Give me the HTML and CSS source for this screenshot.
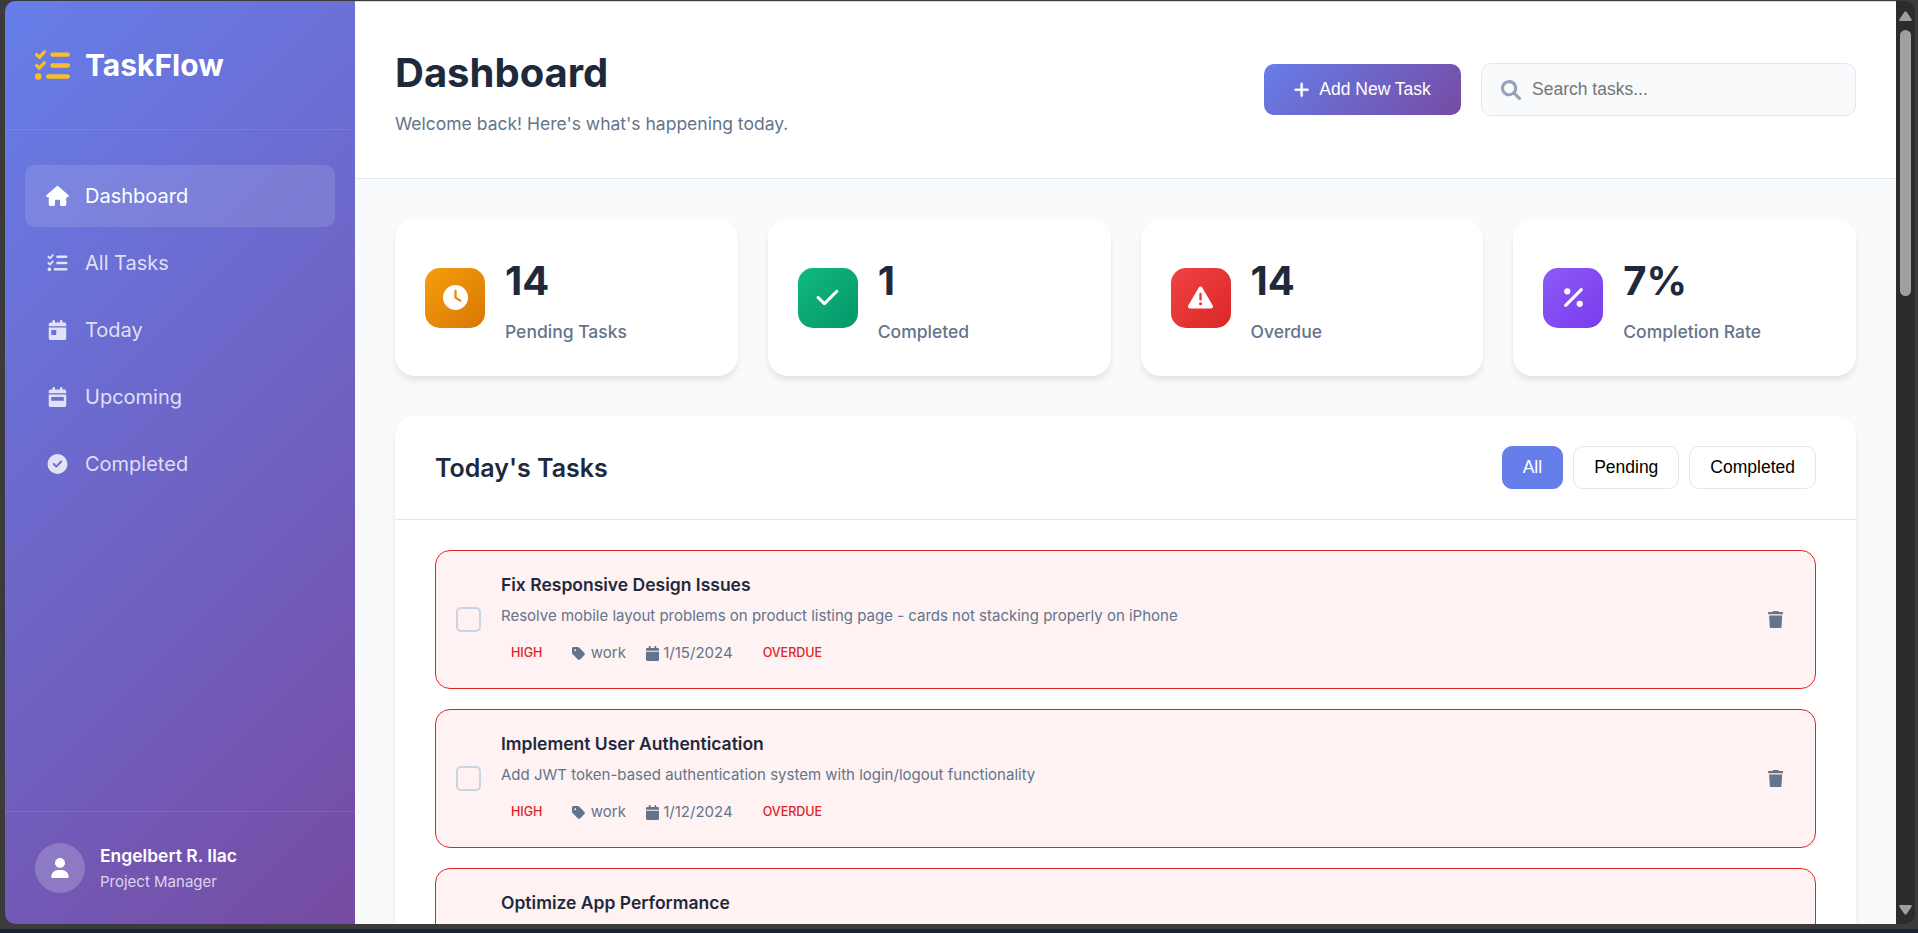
FILE: index.html
```html
<!DOCTYPE html>
<html lang="en">
<head>
<meta charset="utf-8">
<title>TaskFlow</title>
<link rel="stylesheet" href="styles.css">
</head>
<body>
<svg class="sprite" aria-hidden="true">
  <symbol id="list-check" viewBox="0 0 512 512"><path d="M152.1 38.2c9.9 8.9 10.7 24 1.8 33.9l-72 80c-4.4 4.9-10.6 7.8-17.2 7.9s-12.9-2.4-17.6-7L7 113C-2.3 103.6-2.3 88.4 7 79s24.6-9.4 33.9 0l22.1 22.1 55.1-61.2c8.9-9.9 24-10.7 33.9-1.8zm0 160c9.9 8.9 10.7 24 1.8 33.9l-72 80c-4.4 4.9-10.6 7.8-17.2 7.9s-12.9-2.4-17.6-7L7 273c-9.4-9.4-9.4-24.6 0-33.9s24.6-9.4 33.9 0l22.1 22.1 55.1-61.2c8.9-9.9 24-10.7 33.9-1.8zM224 96c0-17.7 14.3-32 32-32H480c17.7 0 32 14.3 32 32s-14.3 32-32 32H256c-17.7 0-32-14.3-32-32zm0 160c0-17.7 14.3-32 32-32H480c17.7 0 32 14.3 32 32s-14.3 32-32 32H256c-17.7 0-32-14.3-32-32zM160 416c0-17.7 14.3-32 32-32H480c17.7 0 32 14.3 32 32s-14.3 32-32 32H192c-17.7 0-32-14.3-32-32zM48 368a48 48 0 1 1 0 96 48 48 0 1 1 0-96z"/></symbol>
  <symbol id="house" viewBox="0 0 576 512"><path d="M575.8 255.5c0 18-15 32.1-32 32.1h-32l.7 160.2c0 2.7-.2 5.4-.5 8.1V472c0 22.1-17.9 40-40 40H456c-1.1 0-2.2 0-3.3-.1c-1.4 .1-2.8 .1-4.2 .1H416 392c-22.1 0-40-17.9-40-40V448 384c0-17.7-14.3-32-32-32H256c-17.7 0-32 14.3-32 32v64 24c0 22.1-17.9 40-40 40H160 128.1c-1.5 0-3-.1-4.5-.2c-1.2 .1-2.4 .2-3.6 .2H104c-22.1 0-40-17.9-40-40V360c0-.9 0-1.9 .1-2.8V287.6H32c-18 0-32-14-32-32.1c0-9 3-17 10-24L266.4 8c7-7 15-8 22-8s15 2 21 7L564.8 231.5c8 7 12 15 11 24z"/></symbol>
  <symbol id="calendar-day" viewBox="0 0 448 512"><path d="M128 0c17.7 0 32 14.3 32 32V64H288V32c0-17.7 14.3-32 32-32s32 14.3 32 32V64h48c26.5 0 48 21.5 48 48v48H0V112C0 85.5 21.5 64 48 64H96V32c0-17.7 14.3-32 32-32zM0 192H448V464c0 26.5-21.5 48-48 48H48c-26.5 0-48-21.5-48-48V192zm80 64c-8.8 0-16 7.2-16 16v96c0 8.8 7.2 16 16 16h96c8.8 0 16-7.2 16-16V272c0-8.8-7.2-16-16-16H80z"/></symbol>
  <symbol id="calendar-week" viewBox="0 0 448 512"><path d="M128 0c17.7 0 32 14.3 32 32V64H288V32c0-17.7 14.3-32 32-32s32 14.3 32 32V64h48c26.5 0 48 21.5 48 48v48H0V112C0 85.5 21.5 64 48 64H96V32c0-17.7 14.3-32 32-32zM0 192H448V464c0 26.5-21.5 48-48 48H48c-26.5 0-48-21.5-48-48V192zm80 64c-8.8 0-16 7.2-16 16v64c0 8.8 7.2 16 16 16H368c8.8 0 16-7.2 16-16V272c0-8.8-7.2-16-16-16H80z"/></symbol>
  <symbol id="circle-check" viewBox="0 0 512 512"><path d="M256 512A256 256 0 1 0 256 0a256 256 0 1 0 0 512zM369 209L241 337c-9.4 9.4-24.6 9.4-33.9 0l-64-64c-9.4-9.4-9.4-24.6 0-33.9s24.6-9.4 33.9 0l47 47L335 175c9.4-9.4 24.6-9.4 33.9 0s9.4 24.6 0 33.9z"/></symbol>
  <symbol id="user" viewBox="0 0 448 512"><path d="M224 256A128 128 0 1 0 224 0a128 128 0 1 0 0 256zm-45.7 48C79.8 304 0 383.8 0 482.3C0 498.7 13.3 512 29.7 512H418.3c16.4 0 29.7-13.3 29.7-29.7C448 383.8 368.2 304 269.7 304H178.3z"/></symbol>
  <symbol id="plus" viewBox="0 0 448 512"><path d="M256 80c0-17.7-14.3-32-32-32s-32 14.3-32 32V224H48c-17.7 0-32 14.3-32 32s14.3 32 32 32H192V432c0 17.7 14.3 32 32 32s32-14.3 32-32V288H400c17.7 0 32-14.3 32-32s-14.3-32-32-32H256V80z"/></symbol>
  <symbol id="search" viewBox="0 0 512 512"><path d="M500.3 443.7l-119.7-119.7c27.22-40.41 40.65-90.9 33.46-144.7C401.8 87.79 326.8 13.32 235.2 1.723C99.01-15.51-15.51 99.01 1.724 235.2c11.6 91.64 86.08 166.7 177.6 178.9c53.8 7.189 104.3-6.236 144.7-33.46l119.7 119.7c15.62 15.62 40.95 15.62 56.57 0C515.9 484.7 515.9 459.3 500.3 443.7zM79.1 208c0-70.58 57.42-128 128-128s128 57.42 128 128c0 70.58-57.42 128-128 128S79.1 278.6 79.1 208z"/></symbol>
  <symbol id="clock" viewBox="0 0 512 512"><path d="M256 0a256 256 0 1 1 0 512A256 256 0 1 1 256 0zM232 120V256c0 8 4 15.5 10.7 20l96 64c11 7.4 25.9 4.4 33.3-6.7s4.4-25.9-6.7-33.3L280 243.2V120c0-13.3-10.7-24-24-24s-24 10.7-24 24z"/></symbol>
  <symbol id="check" viewBox="0 0 448 512"><path d="M438.6 105.4c12.5 12.5 12.5 32.8 0 45.3l-256 256c-12.5 12.5-32.8 12.5-45.3 0l-128-128c-12.5-12.5-12.5-32.8 0-45.3s32.8-12.5 45.3 0L160 338.7 393.4 105.4c12.5-12.5 32.8-12.5 45.3 0z"/></symbol>
  <symbol id="warning" viewBox="0 0 512 512"><path d="M256 32c14.2 0 27.3 7.5 34.5 19.8l216 368c7.3 12.4 7.3 27.7 .2 40.1S486.3 480 472 480H40c-14.3 0-27.6-7.7-34.7-20.1s-7-27.8 .2-40.1l216-368C228.7 39.5 241.8 32 256 32zm0 128c-13.3 0-24 10.7-24 24V296c0 13.3 10.7 24 24 24s24-10.7 24-24V184c0-13.3-10.7-24-24-24zm32 224a32 32 0 1 0-64 0 32 32 0 1 0 64 0z"/></symbol>
  <symbol id="percent" viewBox="0 0 384 512"><path d="M374.6 118.6c12.5-12.5 12.5-32.8 0-45.3s-32.8-12.5-45.3 0l-320 320c-12.5 12.5-12.5 32.8 0 45.3s32.8 12.5 45.3 0l320-320zM128 128A64 64 0 1 0 0 128a64 64 0 1 0 128 0zM384 384a64 64 0 1 0-128 0 64 64 0 1 0 128 0z"/></symbol>
  <symbol id="tag" viewBox="0 0 448 512"><path d="M0 80V229.5c0 17 6.7 33.3 18.7 45.3l176 176c25 25 65.5 25 90.5 0L418.7 317.3c25-25 25-65.5 0-90.5l-176-176c-12-12-28.3-18.7-45.3-18.7H48C21.5 32 0 53.5 0 80zm112 32a32 32 0 1 1 0 64 32 32 0 1 1 0-64z"/></symbol>
  <symbol id="calendar" viewBox="0 0 448 512"><path d="M96 32V64H48C21.5 64 0 85.5 0 112v48H448V112c0-26.5-21.5-48-48-48H352V32c0-17.7-14.3-32-32-32s-32 14.3-32 32V64H160V32c0-17.7-14.3-32-32-32S96 14.3 96 32zM448 192H0V464c0 26.5 21.5 48 48 48H400c26.5 0 48-21.5 48-48V192z"/></symbol>
  <symbol id="trash" viewBox="0 0 448 512"><path d="M135.2 17.7L128 32H32C14.3 32 0 46.3 0 64S14.3 96 32 96H416c17.7 0 32-14.3 32-32s-14.3-32-32-32H320l-7.2-14.3C307.4 6.8 296.3 0 284.2 0H163.8c-12.1 0-23.2 6.8-28.6 17.7zM416 128H32L53.2 467c1.6 25.3 22.6 45 47.9 45H346.9c25.3 0 46.3-19.7 47.9-45L416 128z"/></symbol>
</svg>

<div class="window">
  <aside class="sidebar">
    <div class="logo">
      <svg class="logo-icon"><use href="#list-check"/></svg>
      <span>TaskFlow</span>
    </div>
    <nav class="nav">
      <a class="nav-item active"><svg class="nav-icon"><use href="#house"/></svg><span>Dashboard</span></a>
      <a class="nav-item"><svg class="nav-icon"><use href="#list-check"/></svg><span>All Tasks</span></a>
      <a class="nav-item"><svg class="nav-icon"><use href="#calendar-day"/></svg><span>Today</span></a>
      <a class="nav-item"><svg class="nav-icon"><use href="#calendar-week"/></svg><span>Upcoming</span></a>
      <a class="nav-item"><svg class="nav-icon"><use href="#circle-check"/></svg><span>Completed</span></a>
    </nav>
    <div class="profile">
      <div class="avatar"><svg class="avatar-icon"><use href="#user"/></svg></div>
      <div>
        <div class="profile-name">Engelbert R. Ilac</div>
        <div class="profile-role">Project Manager</div>
      </div>
    </div>
  </aside>

  <main class="main">
    <header class="header">
      <div>
        <h1 class="title">Dashboard</h1>
        <p class="subtitle">Welcome back! Here's what's happening today.</p>
      </div>
      <div class="actions">
        <button class="add-btn"><svg class="add-icon"><use href="#plus"/></svg>Add New Task</button>
        <div class="search">
          <svg class="search-icon"><use href="#search"/></svg>
          <span class="search-text">Search tasks...</span>
        </div>
      </div>
    </header>

    <div class="content">
      <section class="stats">
        <div class="stat">
          <div class="stat-icon pending"><svg><use href="#clock"/></svg></div>
          <div><div class="stat-value">14</div><div class="stat-label">Pending Tasks</div></div>
        </div>
        <div class="stat">
          <div class="stat-icon done"><svg><use href="#check"/></svg></div>
          <div><div class="stat-value">1</div><div class="stat-label">Completed</div></div>
        </div>
        <div class="stat">
          <div class="stat-icon overdue"><svg><use href="#warning"/></svg></div>
          <div><div class="stat-value">14</div><div class="stat-label">Overdue</div></div>
        </div>
        <div class="stat">
          <div class="stat-icon rate"><svg><use href="#percent"/></svg></div>
          <div><div class="stat-value">7%</div><div class="stat-label">Completion Rate</div></div>
        </div>
      </section>

      <section class="tasks">
        <div class="tasks-header">
          <h2 class="tasks-title">Today's Tasks</h2>
          <div class="filters">
            <button class="filter selected">All</button>
            <button class="filter">Pending</button>
            <button class="filter">Completed</button>
          </div>
        </div>
        <div class="task-list">
          <article class="task">
            <div class="checkbox"></div>
            <div class="task-body">
              <div class="task-title">Fix Responsive Design Issues</div>
              <div class="task-desc">Resolve mobile layout problems on product listing page - cards not stacking properly on iPhone</div>
              <div class="task-meta">
                <span class="badge">HIGH</span>
                <span class="meta category"><svg class="meta-icon"><use href="#tag"/></svg>work</span>
                <span class="meta"><svg class="meta-icon"><use href="#calendar"/></svg>1/15/2024</span>
                <span class="badge">OVERDUE</span>
              </div>
            </div>
            <svg class="trash"><use href="#trash"/></svg>
          </article>
          <article class="task">
            <div class="checkbox"></div>
            <div class="task-body">
              <div class="task-title">Implement User Authentication</div>
              <div class="task-desc">Add JWT token-based authentication system with login/logout functionality</div>
              <div class="task-meta">
                <span class="badge">HIGH</span>
                <span class="meta category"><svg class="meta-icon"><use href="#tag"/></svg>work</span>
                <span class="meta"><svg class="meta-icon"><use href="#calendar"/></svg>1/12/2024</span>
                <span class="badge">OVERDUE</span>
              </div>
            </div>
            <svg class="trash"><use href="#trash"/></svg>
          </article>
          <article class="task">
            <div class="checkbox"></div>
            <div class="task-body">
              <div class="task-title">Optimize App Performance</div>
            </div>
          </article>
        </div>
      </section>
    </div>
  </main>

  <div class="scrollbar">
    <svg class="arrow" viewBox="0 0 13 10"><path d="M5.2 1.2Q6.5-.6 7.8 1.2L12.6 8.2Q13.200 10 11.500 10H1.500Q-.2 10 .4 8.200Z"/></svg>
    <div class="thumb"></div>
    <svg class="arrow arrow-down" viewBox="0 0 13 10"><path d="M5.2 8.8Q6.5 10.600 7.800 8.800L12.600 1.800Q13.200 0 11.500 0H1.500Q-.2 0 .4 1.800Z"/></svg>
  </div>
</div>
<div class="desktop-edge"></div>
</body>
</html>
```

FILE: styles.css
```css
* { box-sizing: border-box; margin: 0; padding: 0; }

body {
  width: 1918px;
  height: 933px;
  padding: 1px 3px 0 5px;
  overflow: hidden;
  background: #3b3b3b;
  font-family: Inter, "Open Sans", sans-serif;
  line-height: 1.6;
  color: #1e293b;
}

svg { display: block; fill: currentColor; }
.sprite { display: none; }

.window {
  display: flex;
  height: 923px;
  border-radius: 10px;
  overflow: hidden;
  background: #2c2c2c;
}
.desktop-edge { height: 4px; margin: 5px -3px 0 -5px; background: #1a2237; }

/* Sidebar */
.sidebar {
  display: flex;
  flex-direction: column;
  flex: none;
  width: 350px;
  background: linear-gradient(135deg, #667eea 0%, #764ba2 100%);
  color: #fff;
}
.logo {
  display: flex;
  align-items: center;
  gap: 15px;
  height: 129px;
  padding: 0 30px;
  border-bottom: 1px solid rgba(255, 255, 255, .1);
  font-size: 30px;
  font-weight: 700;
}
.logo-icon { width: 35px; height: 35px; color: #fbbf24; }
.nav { display: flex; flex-direction: column; flex: 1; gap: 5px; padding: 35px 20px; }
.nav-item {
  display: flex;
  align-items: center;
  gap: 15px;
  height: 62px;
  padding: 0 20px;
  border-radius: 10px;
  font-size: 20px;
  color: rgba(255, 255, 255, .8);
}
.nav-item.active { background: rgba(255, 255, 255, .12); color: #fff; }
.nav-icon { width: 25px; height: 20px; }
.profile {
  display: flex;
  align-items: center;
  gap: 15px;
  padding: 30px;
  border-top: 1px solid rgba(255, 255, 255, .1);
}
.avatar {
  display: flex;
  align-items: center;
  justify-content: center;
  width: 50px;
  height: 50px;
  border-radius: 50%;
  background: rgba(255, 255, 255, .2);
}
.avatar-icon { width: 18px; height: 20px; }
.profile-name { font-size: 17.5px; font-weight: 600; }
.profile-role { font-size: 15px; color: rgba(255, 255, 255, .75); }

/* Main */
.main { width: 1541px; flex: none; background: #f8fafc; }
.header {
  display: flex;
  align-items: center;
  justify-content: space-between;
  padding: 40px;
  border-bottom: 1px solid #e2e8f0;
  background: #fff;
  box-shadow: inset 0 1px #dcdcdc;
}
.title { font-size: 40px; font-weight: 700; }
.subtitle { margin-top: 5px; font-size: 17.5px; color: #64748b; }
.actions { display: flex; align-items: center; gap: 20px; }
.add-btn {
  display: flex;
  align-items: center;
  gap: 10px;
  width: 197px;
  height: 51px;
  padding: 0 30px;
  border: 0;
  border-radius: 10px;
  background: linear-gradient(135deg, #667eea, #764ba2);
  color: #fff;
  font: 17.5px "Liberation Sans", Arial, sans-serif;
  white-space: nowrap;
}
.add-icon { flex: none; width: 15.3px; height: 17.5px; stroke: currentColor; stroke-width: 10; }
.search {
  display: flex;
  align-items: center;
  gap: 11px;
  width: 375px;
  height: 53px;
  padding: 0 19px;
  border: 1px solid #e2e8f0;
  border-radius: 10px;
  background: #f8fafc;
}
.search-icon { width: 20px; height: 20px; color: #94a3b8; }
.search-text { font: 17.5px "Liberation Sans", Arial, sans-serif; color: #757575; }

.content { padding: 40px; }

/* Statistics */
.stats { display: grid; grid-template-columns: repeat(4, 1fr); gap: 30px; margin-bottom: 40px; }
.stat {
  display: flex;
  align-items: center;
  gap: 20px;
  padding: 30px;
  border-radius: 20px;
  background: #fff;
  box-shadow: 0 5px 7.5px -1.25px rgba(0, 0, 0, .1);
}
.stat-icon {
  display: flex;
  align-items: center;
  justify-content: center;
  width: 60px;
  height: 60px;
  border-radius: 15px;
  color: #fff;
}
.stat-icon svg { width: 25px; height: 25px; }
.pending { background: linear-gradient(135deg, #f59e0b, #d97706); }
.done { background: linear-gradient(135deg, #10b981, #059669); }
.overdue { background: linear-gradient(135deg, #ef4444, #dc2626); }
.rate { background: linear-gradient(135deg, #8b5cf6, #7c3aed); }
.stat-value { margin-bottom: 5px; font-size: 40px; font-weight: 700; }
.stat-label { font-size: 17.5px; font-weight: 500; color: #64748b; }

/* Tasks */
.tasks { border-radius: 20px; background: #fff; box-shadow: 0 5px 7.5px -1.25px rgba(0, 0, 0, .1); }
.tasks-header {
  display: flex;
  align-items: center;
  justify-content: space-between;
  padding: 30px 40px;
  border-bottom: 1px solid #e2e8f0;
}
.tasks-title { font-size: 25px; font-weight: 600; line-height: 40px; }
.filters { display: flex; gap: 10px; }
.filter {
  height: 43px;
  padding: 0 20px;
  border: 1px solid #e2e8f0;
  border-radius: 10px;
  background: #fff;
  color: #000;
  font: 17.5px "Liberation Sans", Arial, sans-serif;
}
.filter.selected { border-color: #667eea; background: #667eea; color: #fff; }
.task-list { display: flex; flex-direction: column; gap: 20px; padding: 30px 40px; }
.task {
  display: flex;
  align-items: center;
  gap: 20px;
  height: 139px;
  padding: 20px;
  border: 1px solid #dc2626;
  border-radius: 15px;
  background: #fef2f2;
}
.checkbox { width: 25px; height: 25px; border: 2px solid #cbd5e1; border-radius: 5px; }
.task-body { flex: 1; height: 97px; }
.task-title { font-size: 17.5px; font-weight: 600; }
.task-desc { margin-top: 5px; font-size: 15px; color: #64748b; }
.task-meta { display: flex; align-items: center; gap: 20px; height: 30px; margin-top: 10px; }
.badge { padding: 0 10px; font-size: 12.5px; font-weight: 500; color: #dc2626; }
.meta { display: flex; align-items: center; gap: 4.2px; font-size: 15px; color: #64748b; }
.meta.category { gap: 5.4px; }
.meta-icon { width: 13.1px; height: 15px; }
.trash { width: 15.3px; height: 17.5px; margin-right: 12px; color: #64748b; }

/* Browser scrollbar */
.scrollbar { display: flex; flex-direction: column; align-items: center; width: 19px; padding: 10px 0 9px; color: #9f9f9f; }
.arrow { width: 13px; height: 10px; }
.thumb { width: 11px; height: 266px; margin-top: 9px; border-radius: 6px; background: #9f9f9f; }
.arrow-down { margin-top: auto; }
```
